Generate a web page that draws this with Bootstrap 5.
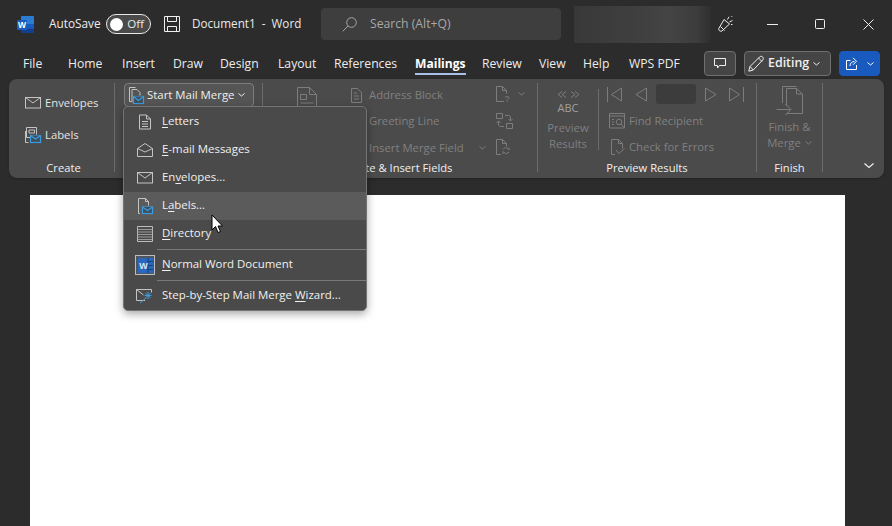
<!DOCTYPE html>
<html lang="en">
<head>
<meta charset="utf-8">
<title>Document1 - Word</title>
<link href="https://cdn.jsdelivr.net/npm/bootstrap@5.3.0/dist/css/bootstrap.min.css" rel="stylesheet">
<style>
html,body{height:526px;overflow:hidden}
body{background:#2c2c2c;color:#e9e9e9;font-family:"Open Sans","Noto Sans","Liberation Sans",sans-serif;font-size:12px;display:flex;flex-direction:column}
svg{display:block;flex:none;overflow:visible}
.st{fill:none;stroke:#c4c4c4;stroke-width:1}
.dis{fill:none;stroke:#7d7d7d;stroke-width:1}
.blu{fill:#3f4f5c;stroke:#3d9be0;stroke-width:1.2}
.titlebar{height:48px;flex:none}
.wlogo{margin-left:17px}
.auto-lbl{margin-left:15px;width:57px;font-size:11.8px;color:#ececec}
.tgl{width:45px;height:20px;border:1px solid #e8e8e8;border-radius:10px;background:#4a4a4a;padding:0 6px 0 3px;font-size:11.5px}
.tgl i{width:13px;height:13px;border-radius:50%;background:#fff;display:block}
.save-ic{margin-left:13px}
.docname{margin-left:12px;font-size:11.7px;white-space:pre;width:129px}
.searchbox{width:240px;height:32px;background:#3e3e3e;border-radius:4px;padding-left:21px;color:#a8a8a8;font-size:12.2px;gap:13px}
.blurbox{width:137px;height:37px;margin-left:13px;background:linear-gradient(90deg,#383838,#3f3f3f 45%,#444 70%,#3c3c3c 90%,#2e2e2e)}
.cele{margin-left:7px}
.winbtn{width:48px;justify-content:center}
.tabrow{height:31px;flex:none}
.tabs{padding-left:23px;flex-wrap:nowrap}
.tabs .nav-link{padding:0;color:#ececec;font-size:12.2px;line-height:31px;height:31px;white-space:nowrap;border-radius:0}
.tabs .nav-link.active{font-weight:700;font-size:12.1px;color:#fff;box-shadow:inset 0 -3px 0 -1px #a9c1ea;height:27px}
.tw1{width:45px}.tw2{width:54px}.tw3{width:51px}.tw4{width:47px}.tw5{width:58px}.tw6{width:56px}.tw7{width:81px}.tw8{width:67px}.tw9{width:57px}.tw10{width:44px}.tw11{width:46px}
.tbtn{height:25px;border:1px solid #6f6f6f;background:#454545;border-radius:4px;color:#f0f0f0;padding:0;display:flex;align-items:center;justify-content:center;font-size:12.4px;font-weight:600}
.tbtn:hover{background:#454545;color:#f0f0f0;border-color:#6f6f6f}
.tbtn-cmt{width:32px}
.tbtn-edit{width:87px;margin-left:8px;gap:4px;justify-content:flex-start;padding-left:3px}
.tbtn-share{width:41px;margin-left:8px;background:#185abd;border-color:#185abd;gap:9px}
.tbtn-share:hover{background:#185abd;border-color:#185abd}
.rightbtns{margin-left:auto;margin-right:12px;padding-top:3px}
.ribbon{height:99px;margin:0 8px 0 9px;background:#4b4b4b;border-radius:8px;padding-top:4px;position:relative;flex:none;box-shadow:0 1px 2px #222}
.rsep{width:1px;background:#6c6c6c;height:89px;flex:none}
.rsep-short{height:61px;margin-top:6px}
.rgroup{height:93px;display:flex;flex-direction:column;flex:none}
.rbody{flex:1 1 auto;min-height:0;display:flex}
.rlabel{height:16px;line-height:16px;text-align:center;font-size:11.2px;color:#f0f0f0;flex:none;white-space:nowrap}
.g1 .rlabel{padding-left:4px}
.g1{width:105px}.g2{width:147px}.g3{width:274px}.g4{width:218px}.g5{width:65px}
.ritem{display:flex;align-items:center;font-size:11.3px;color:#e4e4e4;white-space:nowrap}
.ritem-dis{color:#808080}
.g1 .rbody{flex-direction:column;padding:8px 0 0 16px;gap:8px}
.g1 .ritem{height:24px;gap:4px}
.smm{width:130px;height:24px;margin-left:9px;border:1px solid #7d7d7d;border-radius:4px;background:#555;color:#eee;padding:0 0 0 4px;display:flex;align-items:center;font-size:11.4px;gap:3px}
.smm:hover{background:#555;color:#eee;border-color:#7d7d7d}
.smm-chev{margin-left:1px}
.g3 .rbody{padding-left:8px;color:#808080}
.cbig{width:80px;padding:4px 0 0 26px}
.c3mid{width:145px;margin-top:-1px}
.c3mid .ritem{height:26.5px;gap:7px}
.c3r{margin-top:-2px}
.c3r .ritem{height:26.5px;gap:3px}
.cprev{width:60px;text-align:center;color:#808080;font-size:11.3px;line-height:16px;display:flex;flex-direction:column;align-items:center}
.arr2{margin-top:8px}
.abc{font-size:11px;line-height:11px;color:#a0a0a0;margin-top:4px}
.prevtxt{margin-top:7px}
.cnav{padding-left:8px;padding-top:1px}
.navrow{height:20px;margin-bottom:4px}
.recbox{width:40px;height:20px;background:#3c3c3c;border-radius:3px}
.cnav .ritem{height:26px;gap:4px}
.ic-find{margin-left:2px}
.ic-check{margin-left:4px}
.cfin{width:100%;text-align:center;color:#808080;font-size:11.3px;line-height:16px;display:flex;flex-direction:column;align-items:center}
.ic-fin{margin-top:3px}
.fintxt{margin-top:3px}
.collapse-ic{margin:80px 10px 0 auto}
.mmenu{left:114px;top:27px;width:244px;height:205px;background:#4a4a4a;border:1px solid #747474;border-radius:5px;padding:1px 0 0;margin:0;box-shadow:0 3px 8px rgba(0,0,0,.35);z-index:5}
.mmenu .dropdown-item{height:28px;padding:0 0 2px 38px;color:#f0f0f0;font-size:11.45px;display:flex;align-items:center;position:relative}
.mmenu .dropdown-item.hov{background:#5b5b5b;color:#f0f0f0}
.mmenu .mi{position:absolute;left:11px;top:50%;transform:translateY(-50%);width:20px;display:flex;justify-content:center}
.mmenu u{text-underline-offset:2px}
.mmenu .dropdown-divider{margin:0 0 0 33px;border-color:#7a7a7a;opacity:1}
.mmenu .div-first{margin-top:1px}
.mmenu .tall{height:30px;padding-bottom:2px}
.wdsel{width:20px;height:20px;background:#4f5660;border:1px solid #bdbdbd;display:flex;align-items:center;justify-content:center}
.docpage{width:815px;margin:17px 0 0 30px;background:#fff;flex:1 1 auto}
.ptr{position:absolute;left:211px;top:214px;z-index:9}
</style>
</head>
<body>
<svg width="0" height="0" class="position-absolute">
  <defs>
    <symbol id="env" viewBox="0 0 16 12"><rect class="st" x=".5" y=".5" width="15" height="10.5"/><path class="st" d="M.5 .5 8 6l7.500-5.500"/></symbol>
  </defs>
</svg>

<div class="titlebar d-flex align-items-center">
  <svg class="wlogo" width="17" height="17" viewBox="0 0 17 17"><rect x="4" y="0" width="13" height="17" rx="1" fill="#2b7cd3"/><rect x="4" y="8" width="13" height="4.500" fill="#185abd"/><rect x="4" y="12.500" width="13" height="4.500" fill="#103f91"/><rect x="0" y="4" width="10" height="10" rx="1" fill="#1a5dbe"/><text x="5" y="12" font-size="8.500" font-weight="700" fill="#fff" text-anchor="middle" font-family="Liberation Sans">W</text></svg>
  <span class="auto-lbl">AutoSave</span>
  <div class="tgl d-flex align-items-center justify-content-between"><i></i><span>Off</span></div>
  <svg class="save-ic" width="16" height="16" viewBox="0 0 16 16"><path d="M.5.500h15v15H.5zM3.500.5v5h9v-5M3.500 15.500v-5h9v5" fill="none" stroke="#f0f0f0"/></svg>
  <span class="docname">Document1  -  Word</span>
  <div class="searchbox d-flex align-items-center">
    <svg width="15" height="15" viewBox="0 0 15 15"><circle cx="9.500" cy="5.500" r="4.800" fill="none" stroke="#a8a8a8"/><path d="M6 9 .8 14.300" stroke="#a8a8a8" fill="none"/></svg>
    <span>Search (Alt+Q)</span>
  </div>
  <div class="blurbox"></div>
  <svg class="cele" width="16" height="16" viewBox="0 0 16 16"><path d="M.8 12.500 6 3.500 11.500 8 4 15c-1.500.8-3.800-.5-3.200-2.500zM2.500 10.500l4 4" fill="none" stroke="#eee"/><path d="M9.500 3.500 11 .8M11.500 6l3-1.500M13.500 .8l.8-.8M13 8.500h1.500" fill="none" stroke="#eee"/></svg>
  <div class="ms-auto d-flex align-items-center">
    <div class="winbtn d-flex"><svg width="11" height="1" viewBox="0 0 11 1"><path d="M0 .5h11" stroke="#eee"/></svg></div>
    <div class="winbtn d-flex"><svg width="10" height="10" viewBox="0 0 10 10"><rect x=".5" y=".5" width="9" height="9" rx="1" fill="none" stroke="#eee"/></svg></div>
    <div class="winbtn d-flex"><svg width="11" height="11" viewBox="0 0 11 11"><path d="M.5.500l10 10M10.500.5l-10 10" stroke="#eee" fill="none"/></svg></div>
  </div>
</div>

<div class="tabrow d-flex">
  <ul class="nav tabs">
    <li class="nav-item tw1"><a class="nav-link" href="#">File</a></li>
    <li class="nav-item tw2"><a class="nav-link" href="#">Home</a></li>
    <li class="nav-item tw3"><a class="nav-link" href="#">Insert</a></li>
    <li class="nav-item tw4"><a class="nav-link" href="#">Draw</a></li>
    <li class="nav-item tw5"><a class="nav-link" href="#">Design</a></li>
    <li class="nav-item tw6"><a class="nav-link" href="#">Layout</a></li>
    <li class="nav-item tw7"><a class="nav-link" href="#">References</a></li>
    <li class="nav-item tw8"><a class="nav-link active d-inline-block" href="#">Mailings</a></li>
    <li class="nav-item tw9"><a class="nav-link" href="#">Review</a></li>
    <li class="nav-item tw10"><a class="nav-link" href="#">View</a></li>
    <li class="nav-item tw11"><a class="nav-link" href="#">Help</a></li>
    <li class="nav-item"><a class="nav-link" href="#">WPS PDF</a></li>
  </ul>
  <div class="rightbtns d-flex align-items-start">
    <button class="btn tbtn tbtn-cmt" aria-label="Comments"><svg width="12" height="11" viewBox="0 0 12 11"><path d="M.5.500h11v7H5.500L3.500 10V7.500h-3z" fill="none" stroke="#f0f0f0"/></svg></button>
    <button class="btn tbtn tbtn-edit"><svg width="16" height="16" viewBox="0 0 16 16"><path d="M.8 15.200 2 10.500 11.500 1c1-1 2.500-.8 3.200 0s.8 2.200 0 3L5.300 14zM2 10.500 5.300 14M10.500 2l3.500 3.500" fill="none" stroke="#f0f0f0"/></svg><span>Editing</span><svg width="7" height="4" viewBox="0 0 7 4"><path d="M.5.500l3 2.500 3-2.500" fill="none" stroke="#f0f0f0"/></svg></button>
    <button class="btn tbtn tbtn-share" aria-label="Share"><svg width="12" height="13" viewBox="0 0 12 13"><path d="M4.500 3.500H.5v9h10V8M4 9c0-3 2-4.500 4.500-4.500M7 .8l3.500 3.500L7 7.800" fill="none" stroke="#fff"/></svg><svg width="7" height="4" viewBox="0 0 7 4"><path d="M.5.500l3 2.500 3-2.500" fill="none" stroke="#fff"/></svg></button>
  </div>
</div>

<div class="ribbon d-flex align-items-start">
  <div class="rgroup g1">
    <div class="rbody">
      <div class="ritem"><svg width="16" height="12"><use href="#env"/></svg><span>Envelopes</span></div>
      <div class="ritem"><svg width="16" height="16" viewBox="0 0 16 16"><path class="st" d="M5 10.500H1.500V.5h10v7"/><path class="st" d="M4 3h5.500v3H4zM3.500 15.500H.5V4"/><rect class="blu" x="5.500" y="8.500" width="10" height="7"/><path class="blu" d="M5.500 8.500l5 3.500 5-3.500"/></svg><span>Labels</span></div>
    </div>
    <div class="rlabel">Create</div>
  </div>
  <div class="rsep"></div>
  <div class="rgroup g2">
    <button class="btn smm"><svg width="15" height="17" viewBox="0 0 15 17"><path class="st" d="M2.500 14.500H.5V.5h6M3 15.500V2.500h5l3 3v3"/><rect class="blu" x="4.500" y="9.500" width="10" height="7"/><path class="blu" d="M4.500 9.500l5 4 5-4"/></svg><span>Start Mail Merge</span><svg class="smm-chev" width="7" height="4" viewBox="0 0 7 4"><path d="M.5.500l3 2.500 3-2.500" fill="none" stroke="#eee"/></svg></button>
  </div>
  <div class="rsep"></div>
  <div class="rgroup g3">
    <div class="rbody">
      <div class="cbig"><svg width="20" height="22" viewBox="0 0 20 22"><path class="dis" d="M.5 21V.5h12l7 7V21M12.500.5v7h7M3.500 7.500h6v5h-6zM3.500 16h13"/></svg></div>
      <div class="c3mid">
        <div class="ritem ritem-dis"><svg width="11" height="15" viewBox="0 0 11 15"><path class="dis" d="M.5.500h6l4 4v10H.5zM3 5h3M3 8h5M3 11h5"/></svg><span>Address Block</span></div>
        <div class="ritem ritem-dis"><svg width="11" height="15" viewBox="0 0 11 15"></svg><span>Greeting Line</span></div>
        <div class="ritem ritem-dis"><svg width="11" height="15" viewBox="0 0 11 15"></svg><span>Insert Merge Field</span><svg class="ms-2" width="7" height="4" viewBox="0 0 7 4"><path d="M.5.500l3 2.500 3-2.500" fill="none" stroke="#7d7d7d"/></svg></div>
      </div>
      <div class="c3r">
        <div class="ritem"><svg width="15" height="16" viewBox="0 0 15 16"><path class="dis" d="M8 15.500H.5V.5h6l4 4v3M6.500.5v4h4"/><text x="11" y="15.500" font-size="9" fill="#7d7d7d" text-anchor="middle" font-family="Liberation Sans">?</text></svg><svg class="ms-1" width="7" height="4" viewBox="0 0 7 4"><path d="M.5.500l3 2.500 3-2.500" fill="none" stroke="#7d7d7d"/></svg></div>
        <div class="ritem"><svg width="17" height="16" viewBox="0 0 17 16"><path class="dis" d="M.5.500h6v5h-6zM10.500 10.500h6v5h-6zM9 2.500h3.500c1.500 0 2 1 2 2.500v3M12.500 6l2 2 2-2M8 13.500H4.500C3 13.500 2.500 12.500 2.500 11V8M.5 10l2-2 2 2"/></svg></div>
        <div class="ritem"><svg width="15" height="16" viewBox="0 0 15 16"><path class="dis" d="M5 15.500H.5V.5h6l4 4v3M6.500.5v4h4M7 10.500c.5-1.500 3-2.500 5-.5l1 1V8.500M13 13c-1 1.500-3.500 2-5 .5l-1-1v2.500"/></svg></div>
      </div>
    </div>
    <div class="rlabel">Write &amp; Insert Fields</div>
  </div>
  <div class="rsep"></div>
  <div class="rgroup g4">
    <div class="rbody">
      <div class="cprev">
        <svg class="arr2" width="23" height="7" viewBox="0 0 23 7"><path class="dis" d="M5 .5 1 3.500 5 6.500M9 .5 5 3.500 9 6.500M14 .5 18 3.500 14 6.500M18 .5 22 3.500 18 6.500"/></svg>
        <span class="abc">ABC</span>
        <span class="prevtxt">Preview</span><span>Results</span>
      </div>
      <div class="rsep rsep-short"></div>
      <div class="cnav">
        <div class="navrow d-flex align-items-center">
          <svg class="me-3" width="15" height="15" viewBox="0 0 15 15"><path class="dis" d="M.5 0v15M14.500 1v13L4.500 7.500z"/></svg>
          <svg style="margin-left:-3px;margin-right:9px" width="12" height="15" viewBox="0 0 12 15"><path class="dis" d="M11.500 1v13L1 7.500z"/></svg>
          <div class="recbox"></div>
          <svg style="margin-left:9px;margin-right:12px" width="12" height="15" viewBox="0 0 12 15"><path class="dis" d="M.5 1v13L11 7.500z"/></svg>
          <svg width="15" height="15" viewBox="0 0 15 15"><path class="dis" d="M14.500 0v15M.5 1v13l10-6.500z"/></svg>
        </div>
        <div class="ritem ritem-dis"><svg class="ic-find" width="16" height="16" viewBox="0 0 16 16"><path class="dis" d="M.5 15V.5h15V15H.5zM.5 3h15M3 6.500h2M3 9h2M3 11.500h2"/><circle class="dis" cx="10" cy="9" r="2.800"/><path class="dis" d="M12 11l3.500 4"/></svg><span>Find Recipient</span></div>
        <div class="ritem ritem-dis"><svg class="ic-check" width="14" height="16" viewBox="0 0 14 16"><path class="dis" d="M4 15.500H.5V.5h7l4 4v5M7.500.5v4h4M5 11l3 3.500 5.500-5"/></svg><span>Check for Errors</span></div>
      </div>
    </div>
    <div class="rlabel">Preview Results</div>
  </div>
  <div class="rsep"></div>
  <div class="rgroup g5">
    <div class="rbody">
      <div class="cfin">
        <svg class="ic-fin" width="27" height="30" viewBox="0 0 27 30"><path class="dis" d="M6.500 17V.5h14M10.500 27.500h16V8l-6-5.500h-10V20M20.500 2.500V8h6M.5 23.500h14M9.500 18l5.500 5.500-5.500 5.500"/></svg>
        <span class="fintxt">Finish &amp;</span>
        <span class="d-flex align-items-center gap-1">Merge<svg width="7" height="4" viewBox="0 0 7 4"><path d="M.5.500l3 2.500 3-2.500" fill="none" stroke="#7d7d7d"/></svg></span>
      </div>
    </div>
    <div class="rlabel">Finish</div>
  </div>
  <div class="rsep"></div>
  <svg class="collapse-ic" width="10" height="5" viewBox="0 0 10 5"><path d="M.5.500l4.500 4 4.500-4" fill="none" stroke="#f0f0f0" stroke-width="1.200"/></svg>

  <ul class="dropdown-menu d-block position-absolute mmenu">
    <li><a class="dropdown-item" href="#"><span class="mi"><svg width="12" height="15" viewBox="0 0 12 15"><path class="st" d="M.5.500h7l4 4v10H.5zM7.500.5v4h4M3 7h6M3 9.500h6M3 12h6"/></svg></span><span><u>L</u>etters</span></a></li>
    <li><a class="dropdown-item" href="#"><span class="mi"><svg width="16" height="14" viewBox="0 0 16 14"><path class="st" d="M.5 5.500 8 .5l7.500 5v8H.5zM.5 5.500 8 9l7.500-3.500"/></svg></span><span><u>E</u>-mail Messages</span></a></li>
    <li><a class="dropdown-item" href="#"><span class="mi"><svg width="16" height="12"><use href="#env"/></svg></span><span>En<u>v</u>elopes...</span></a></li>
    <li><a class="dropdown-item hov" href="#"><span class="mi"><svg width="16" height="16" viewBox="0 0 16 16"><path class="st" d="M3 15.500H1.500V.5h7l3 3v4M8.500.5v3h3"/><rect class="blu" x="5.500" y="9" width="10" height="6.500"/><path class="blu" d="M5.500 9l5 3.500 5-3.500"/></svg></span><span>L<u>a</u>bels...</span></a></li>
    <li><a class="dropdown-item" href="#"><span class="mi"><svg width="16" height="16" viewBox="0 0 16 16"><path d="M.5.500h15v15H.5z" fill="none" stroke="#bdbdbd"/><path d="M.5 3.500h15M.5 6h15M.5 8.500h15M.5 11h15M.5 13.500h15" fill="none" stroke="#999"/></svg></span><span><u>D</u>irectory</span></a></li>
    <li><hr class="dropdown-divider div-first"></li>
    <li><a class="dropdown-item tall" href="#"><span class="mi"><span class="wdsel"><svg width="15" height="15" viewBox="0 0 15 15"><rect width="15" height="15" fill="#2a68bd"/><path d="M10 0v15M10 3.500h5M10 7.500h5M10 11.500h5" stroke="#173f75"/><text x="5.500" y="11" font-size="9" font-weight="700" fill="#dbe6f5" text-anchor="middle" font-family="Liberation Sans">W</text></svg></span></span><span><u>N</u>ormal Word Document</span></a></li>
    <li><hr class="dropdown-divider"></li>
    <li><a class="dropdown-item tall" href="#"><span class="mi"><svg width="18" height="14" viewBox="0 0 18 14"><path class="st" d="M9 11.500H.5V.5h15v3M.5.500l7 5.500"/><path d="M12 3v7M8.500 6.500h7M9.500 4l5 5M14.500 4l-5 5M10 9l-6 5" fill="none" stroke="#3d9be0"/></svg></span><span>Step-by-Step Mail Merge <u>W</u>izard...</span></a></li>
  </ul>
</div>

<div class="docpage"></div>

<svg class="ptr" width="12" height="20" viewBox="0 0 12 20"><path d="M1 1v15l3.500-3.500L7 18.500l2.500-1L7 12h4.500z" fill="#fff" stroke="#000"/></svg>
</body>
</html>
